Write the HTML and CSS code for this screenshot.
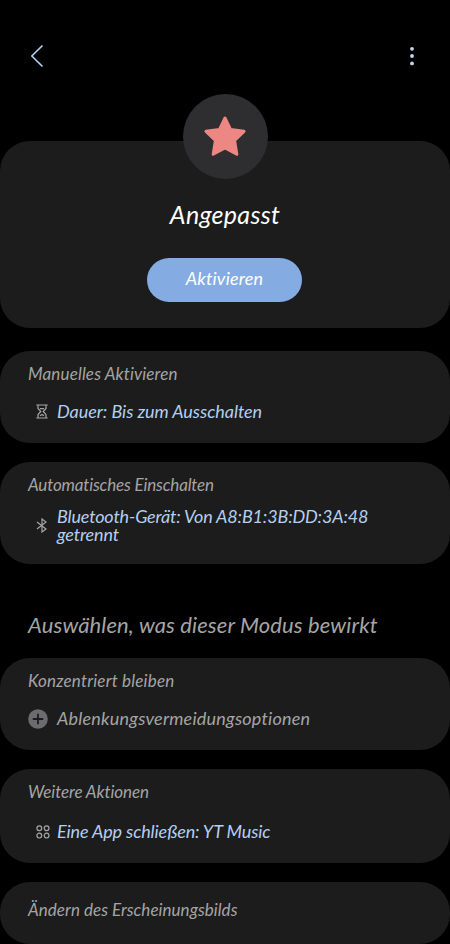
FILE: index.html
```html
<!DOCTYPE html>
<html lang="de">
  <head>
    <meta charset="UTF-8" />
    <meta name="viewport" content="width=device-width, initial-scale=1.0" />
    <title>Angepasst</title>
    <link rel="stylesheet" href="styles.css">
  </head>
  <body>
    <div class="screen">
      <header class="topbar">
        <button class="iconBtn" aria-label="Zurück">
          <svg class="back" width="14" height="24" viewBox="0 0 14 24">
            <path d="M12 2 L1.8 12 L12 22" />
          </svg>
        </button>
        <button class="iconBtn" aria-label="Mehr">
          <svg class="more" width="4" height="20" viewBox="0 0 4 20">
            <circle cx="2" cy="2.8" r="1.9" />
            <circle cx="2" cy="10" r="1.9" />
            <circle cx="2" cy="17.4" r="1.9" />
          </svg>
        </button>
      </header>
      <section class="card hero">
        <div class="badge">
          <svg width="42" height="42" viewBox="0 0 42 42">
            <path d="M21 2 L26.6 13.6 L40 15.3 L30.6 24.4 L32.8 38.3 L21 32 L9.2 38.3 L11.4 24.4 L2 15.3 L15.4 13.6 Z" />
          </svg>
        </div>
        <h1 class="title">Angepasst</h1>
        <button class="activate">Aktivieren</button>
      </section>
      <section class="card manual">
        <h3 class="label">Manuelles Aktivieren</h3>
        <div class="row">
          <div class="icon">
            <svg width="12" height="15" viewBox="0 0 12 15">
              <path d="M0.3 1 H11.7 M0.3 14 H11.7 M2 1 V4.5 L4.8 7.5 L2 10.5 V14 M10 1 V4.5 L7.2 7.5 L10 10.5 V14 M4 4.6 H8 M4 11.8 L6 10.4 L8 11.8" />
            </svg>
          </div>
          <p class="value">Dauer: Bis zum Ausschalten</p>
        </div>
      </section>
      <section class="card auto">
        <h3 class="label">Automatisches Einschalten</h3>
        <div class="row">
          <div class="icon">
            <svg width="12" height="15" viewBox="0 0 12 15">
              <path d="M1 4 L10 11 L6 14 V1 L10 4 L1 11" />
            </svg>
          </div>
          <p class="value address">Bluetooth-Gerät: Von A8:B1:3B:DD:3A:48 getrennt</p>
        </div>
      </section>
      <h2 class="heading">Auswählen, was dieser Modus bewirkt</h2>
      <section class="card focus">
        <h3 class="label">Konzentriert bleiben</h3>
        <div class="row">
          <div class="icon add">
            <svg width="20" height="20" viewBox="0 0 20 20">
              <circle cx="10" cy="10" r="9.8" />
              <path d="M10 4.8 V15.2 M4.8 10 H15.2" />
            </svg>
          </div>
          <p class="value muted">Ablenkungsvermeidungsoptionen</p>
        </div>
      </section>
      <section class="card actions">
        <h3 class="label">Weitere Aktionen</h3>
        <div class="row">
          <div class="icon">
            <svg width="14" height="14" viewBox="0 0 14 14">
              <circle cx="3.3" cy="3.3" r="2.4" />
              <circle cx="10.6" cy="3.3" r="2.4" />
              <circle cx="3.3" cy="10.6" r="2.4" />
              <circle cx="10.6" cy="10.6" r="2.4" />
            </svg>
          </div>
          <p class="value app">Eine App schließen: YT Music</p>
        </div>
      </section>
      <section class="card look">
        <h3 class="label">Ändern des Erscheinungsbilds</h3>
      </section>
    </div>
  </body>
</html>
```

FILE: styles.css
```css
* {
  box-sizing: border-box;
  margin: 0;
  padding: 0;
}
body {
  background-color: #000000;
  font-family: Lato, "Open Sans", sans-serif;
  font-style: italic;
  font-variant-ligatures: none;
  color: #a5a5a5;
}
button {
  border: none;
  background: none;
  font: inherit;
  font-variant-ligatures: none;
}
svg {
  display: block;
}
.screen {
  width: 450px;
  height: 944px;
  overflow: hidden;
  display: flex;
  flex-direction: column;
}
.topbar {
  height: 141px;
  padding: 44px 36px 0 30px;
  display: flex;
  justify-content: space-between;
  align-items: flex-start;
  flex-shrink: 0;
}
.iconBtn {
  height: 24px;
  display: flex;
  align-items: center;
}
.back {
  fill: none;
  stroke: #b4cff5;
  stroke-width: 1.7;
  stroke-linecap: round;
  stroke-linejoin: round;
}
.more {
  fill: #c3d5f2;
}
.card {
  background-color: #1c1c1c;
  border-radius: 30px;
  padding: 0 28px;
  flex-shrink: 0;
}
.hero {
  height: 187px;
  display: flex;
  flex-direction: column;
  align-items: center;
}
.badge {
  width: 85px;
  height: 85px;
  margin-top: -47px;
  border-radius: 50%;
  background-color: #2e2e30;
  display: flex;
  align-items: center;
  justify-content: center;
}
.badge path {
  fill: #ed8783;
  stroke: #ed8783;
  stroke-width: 3;
  stroke-linejoin: round;
}
.title {
  margin-top: 19px;
  font-size: 25px;
  line-height: 32px;
  font-weight: 400;
  letter-spacing: 0.3px;
  color: #ffffff;
}
.activate {
  width: 155px;
  height: 44px;
  margin-top: 28px;
  margin-right: 1px;
  padding-bottom: 4px;
  border-radius: 22px;
  background-color: #84abe2;
  color: #ffffff;
  font-size: 18px;
  letter-spacing: 0.15px;
}
.manual {
  height: 92px;
  margin-top: 23px;
  padding-top: 12px;
}
.auto {
  height: 102px;
  margin-top: 19px;
  padding-top: 12px;
}
.focus {
  height: 92px;
  margin-top: 17px;
  padding-top: 12px;
}
.actions {
  height: 94px;
  margin-top: 19px;
  padding-top: 12px;
}
.look {
  height: 62px;
  margin-top: 19px;
  padding-top: 17px;
}
.label {
  font-size: 17px;
  line-height: 22px;
  font-weight: 400;
  letter-spacing: 0.04px;
  white-space: nowrap;
}
.manual .label {
  letter-spacing: 0.14px;
}
.auto .label {
  letter-spacing: -0.15px;
}
.focus .label {
  letter-spacing: 0.2px;
}
.actions .label {
  letter-spacing: -0.08px;
}
.row {
  margin-top: 16px;
  display: flex;
  align-items: center;
}
.auto .row {
  margin-top: 11px;
}
.actions .row {
  margin-top: 18px;
}
.icon {
  width: 29px;
  height: 20px;
  padding-left: 8px;
  display: flex;
  align-items: center;
  flex-shrink: 0;
}
.icon svg {
  margin-top: 1px;
  fill: none;
  stroke: #a5a5a5;
  stroke-width: 1.2;
}
.icon.add {
  padding-left: 0;
}
.icon.add circle {
  fill: #6c6c6e;
  stroke: none;
}
.icon.add path {
  stroke: #1c1c1c;
  stroke-width: 1.8;
}
.value {
  font-size: 18px;
  line-height: 18px;
  letter-spacing: -0.05px;
  color: #b4cff2;
}
.value.address {
  width: 330px;
  letter-spacing: -0.16px;
}
.value.app {
  letter-spacing: -0.13px;
}
.value.muted {
  color: #a5a5a5;
  letter-spacing: 0.2px;
}
.heading {
  margin-top: 46px;
  padding: 0 28px 1px;
  font-size: 22px;
  line-height: 30px;
  font-weight: 400;
  letter-spacing: 0.12px;
  white-space: nowrap;
}
```
